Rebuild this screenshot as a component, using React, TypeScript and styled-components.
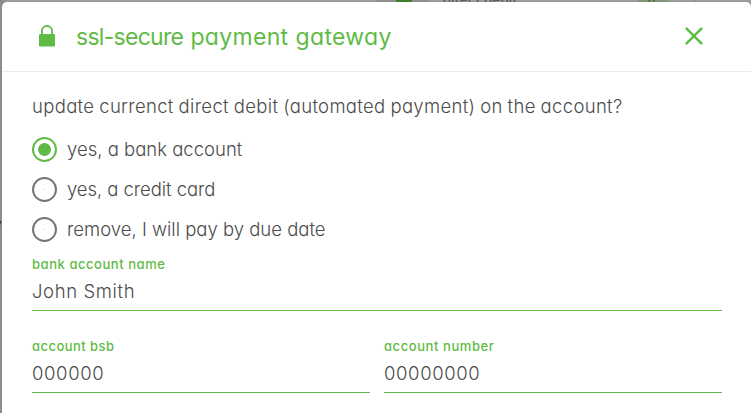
import React, { useState } from "react";
import styled, { createGlobalStyle } from "styled-components";

const GREEN = "#5fbb46";
const INK = "#4c4c4c";

const GlobalStyle = createGlobalStyle`
  * { box-sizing: border-box; }
  html, body { margin: 0; height: 100%; overflow: hidden; }
  body {
    background: #979797;
    color: ${INK};
    font-family: Inter, "Open Sans", sans-serif;
    font-feature-settings: "cv11" 1, "calt" 0;
    font-weight: 300;
  }
`;

const Backdrop = styled.div`
  position: relative;
  width: 751px;
  height: 413px;
  padding: 2px 0 0 2px;
  overflow: hidden;
  background: linear-gradient(90deg, #8c8c8c 0 2px, #9b9b9b 8px);
`;

const Fragment = styled.span<{ $x: number; $w: number; $color: string }>`
  position: absolute;
  top: 0;
  left: ${(p) => p.$x}px;
  width: ${(p) => p.$w}px;
  height: 2px;
  background: ${(p) => p.$color};
`;

const PageText = styled.span<{ $x: number; $y: number; $color: string; $spacing?: number }>`
  position: absolute;
  left: ${(p) => p.$x}px;
  top: ${(p) => p.$y}px;
  color: ${(p) => p.$color};
  font-size: 13px;
  line-height: 16px;
  font-weight: 500;
  letter-spacing: ${(p) => p.$spacing ?? 0}px;
  white-space: nowrap;
`;

const Dialog = styled.section`
  position: relative;
  width: 749px;
  height: 440px;
  background: #fff;
  border-radius: 5px;
`;

const Header = styled.header`
  display: flex;
  align-items: center;
  height: 70px;
  padding: 0 48px 1px 36px;
  border-bottom: 1px solid #ececec;
`;

const Title = styled.h1`
  flex: 1;
  margin: 1px 0 0 20px;
  color: ${GREEN};
  font-size: 23px;
  font-weight: 400;
  line-height: 30px;
  letter-spacing: 0.3px;
  word-spacing: 0.5px;
  white-space: nowrap;
`;

const TightWord = styled.span`
  letter-spacing: -0.72px;
`;

const CloseButton = styled.button`
  display: flex;
  padding: 0;
  border: 0;
  background: none;
`;

const Body = styled.form`
  padding: 22px 29px 0 30px;
`;

const Question = styled.p`
  margin: 0 0 11px;
  height: 24px;
  font-size: 18.5px;
  line-height: 24px;
  letter-spacing: 0.32px;
  word-spacing: -0.6px;
  white-space: nowrap;
`;

const Option = styled.label`
  display: flex;
  align-items: center;
  height: 40px;
  gap: 10px;
`;

const Radio = styled.input<{ $on: boolean }>`
  appearance: none;
  flex: none;
  width: 25px;
  height: 25px;
  margin: 0;
  border: 2px solid ${(p) => (p.$on ? GREEN : "#757575")};
  border-radius: 50%;
  background: ${(p) => (p.$on ? `radial-gradient(circle, ${GREEN} 6px, #fff 6.8px)` : "radial-gradient(circle, #b4d9aa 0.6px, #fff 0.8px)")};
`;

const OptionText = styled.span<{ $spacing: number }>`
  font-size: 18.5px;
  line-height: 24px;
  letter-spacing: ${(p) => p.$spacing}px;
  white-space: nowrap;
`;

const Fields = styled.div`
  display: grid;
  grid-template-columns: 1fr 1fr;
  gap: 25px 14px;
  margin-top: 5px;
`;

const Field = styled.label<{ $wide?: boolean }>`
  display: flex;
  flex-direction: column;
  height: 57px;
  grid-column: ${(p) => (p.$wide ? "1 / -1" : "auto")};
`;

const Caption = styled.span<{ $spacing: number }>`
  height: 20px;
  color: ${GREEN};
  font-size: 13px;
  font-weight: 500;
  line-height: 20px;
  letter-spacing: ${(p) => p.$spacing}px;
`;

const Input = styled.input`
  width: 100%;
  height: 37px;
  padding: 2px 0 5px;
  border: 0;
  border-bottom: 1px solid ${GREEN};
  border-radius: 0;
  outline: 0;
  color: ${INK};
  background: none;
  font: inherit;
  font-feature-settings: inherit;
  font-size: 18.5px;
  letter-spacing: 0.62px;
`;

const LockIcon = () => (
  <svg width="18" height="24" viewBox="0 0 18 24" fill="none">
    <path d="M4 11V6.5a5 4.5 0 0 1 10 0V11" stroke={GREEN} strokeWidth="1.8" />
    <rect x="1" y="10" width="16" height="12.5" rx="1.3" fill={GREEN} />
  </svg>
);

const CloseIcon = () => (
  <svg width="18" height="18" viewBox="0 0 18 18" fill="none">
    <path d="M1.6 1.6 16.4 16.4M16.4 1.6 1.6 16.4" stroke={GREEN} strokeWidth="2.5" strokeLinecap="round" />
  </svg>
);

const OPTIONS = [
  { text: "yes, a bank account", spacing: 0.01 },
  { text: "yes, a credit card", spacing: -0.06 },
  { text: "remove, I will pay by due date", spacing: 0 },
];

export default function App() {
  const [choice, setChoice] = useState(0);
  return (
    <>
      <GlobalStyle />
      <Backdrop>
        <Fragment $x={377} $w={51} $color="#8f8f8f" />
        <Fragment $x={396} $w={16} $color="#3f7d2c" />
        <Fragment $x={638} $w={31} $color="#839579" />
        <Fragment $x={695} $w={1} $color="#8b8b8b" />
        <PageText $x={443} $y={-8} $color="#5d5650" $spacing={0.3}>direct debit</PageText>
        <PageText $x={647} $y={-9} $color="#2f6d1d">//</PageText>
        <PageText $x={-6} $y={216} $color="#222">y</PageText>
        <Dialog>
          <Header>
            <LockIcon />
            <Title>
              <TightWord>ssl-secure</TightWord> payment gateway
            </Title>
            <CloseButton type="button" aria-label="close">
              <CloseIcon />
            </CloseButton>
          </Header>
          <Body>
            <Question>update currenct direct debit (automated payment) on the account?</Question>
            {OPTIONS.map((o, i) => (
              <Option key={o.text}>
                <Radio type="radio" name="method" $on={choice === i} checked={choice === i} onChange={() => setChoice(i)} />
                <OptionText $spacing={o.spacing}>{o.text}</OptionText>
              </Option>
            ))}
            <Fields>
              <Field $wide>
                <Caption $spacing={0.55}>bank account name</Caption>
                <Input defaultValue="John Smith" />
              </Field>
              <Field>
                <Caption $spacing={0.45}>account bsb</Caption>
                <Input defaultValue="000000" />
              </Field>
              <Field>
                <Caption $spacing={0.57}>account number</Caption>
                <Input defaultValue="00000000" />
              </Field>
            </Fields>
          </Body>
        </Dialog>
      </Backdrop>
    </>
  );
}
